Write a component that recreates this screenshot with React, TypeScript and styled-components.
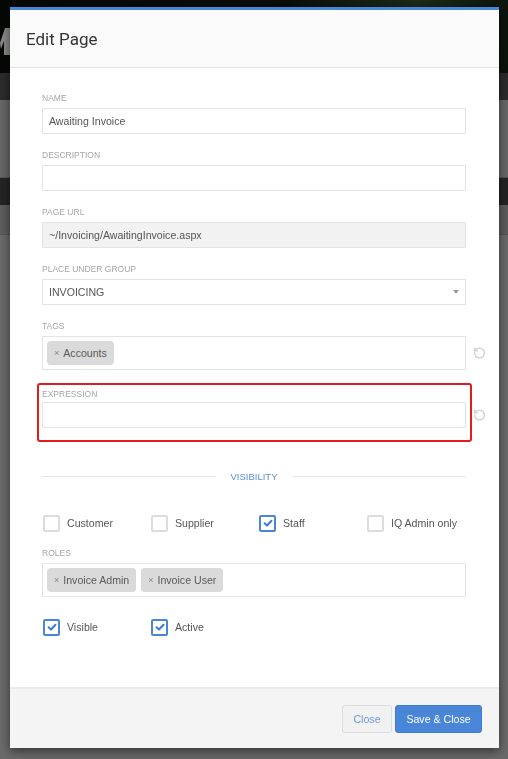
import React from "react";
import styled, { createGlobalStyle } from "styled-components";
import { RotateCcw } from "lucide-react";

const GlobalStyle = createGlobalStyle`
  html, body {
    margin: 0;
    padding: 0;
    height: 100%;
    background: #6a6a6a;
    font-family: "Liberation Sans", Arial, sans-serif;
  }
  * {
    box-sizing: border-box;
  }
`;

const Check = () => (
  <svg width="10" height="10" viewBox="0 0 10 10">
    <polyline
      points="1.6,5.2 4,7.5 8.5,2.7"
      fill="none"
      stroke="#3d7ad6"
      strokeWidth="2"
      strokeLinecap="round"
      strokeLinejoin="round"
    />
  </svg>
);

// the brand mark of the page behind the modal; only its right leg peeks out
const LogoMark = () => (
  <svg width="12" height="30" viewBox="0 0 12 30">
    <polygon points="0,16 5,1 10,1 10,28 4,28 4,14 1,22" fill="#8a8a8a" />
  </svg>
);

const CheckItem = ({ label, checked }: { label: string; checked?: boolean }) => (
  <CheckLabel>
    <Box checked={!!checked}>{checked && <Check />}</Box>
    {label}
  </CheckLabel>
);

const Chip = ({ text }: { text: string }) => (
  <Tag>
    <TagX>×</TagX>
    {text}
  </Tag>
);

const App = () => {
  return (
    <>
      <GlobalStyle />
      <Backdrop>
        <TopBand>
          <LogoMark />
        </TopBand>
        <Band tone="#2c2c2c" h={27} />
        <Band tone="#686868" h={78} line />
        <Band tone="#252525" h={27} />
        <Band tone="#5e5e5e" h={30} line />
        <Band tone="#6b6b6b" h={520} />
      </Backdrop>

      <Modal>
        <Header>
          <Title>Edit Page</Title>
        </Header>

        <Body>
          <Field>
            <Label>Name</Label>
            <Input defaultValue="Awaiting Invoice" />
          </Field>
          <Field>
            <Label>Description</Label>
            <Input defaultValue="" />
          </Field>
          <Field>
            <Label>Page URL</Label>
            <Input defaultValue="~/Invoicing/AwaitingInvoice.aspx" disabled />
          </Field>
          <Field>
            <Label>Place under group</Label>
            <Select>
              INVOICING
              <Caret />
            </Select>
          </Field>
          <Field gap={13}>
            <Label>Tags</Label>
            <ResetRow>
              <TagBox>
                <Chip text="Accounts" />
              </TagBox>
              <Reset>
                <RotateCcw size={13} strokeWidth={2.6} />
              </Reset>
            </ResetRow>
          </Field>

          <Highlight>
            <Label tight>Expression</Label>
            <ResetRow>
              <Input defaultValue="" />
              <Reset>
                <RotateCcw size={13} strokeWidth={2.6} />
              </Reset>
            </ResetRow>
          </Highlight>

          <Divider>
            <span>Visibility</span>
          </Divider>

          <CheckGrid>
            <CheckItem label="Customer" />
            <CheckItem label="Supplier" />
            <CheckItem label="Staff" checked />
            <CheckItem label="IQ Admin only" />
          </CheckGrid>

          <Field gap={21}>
            <Label>Roles</Label>
            <TagBox>
              <Chip text="Invoice Admin" />
              <Chip text="Invoice User" />
            </TagBox>
          </Field>

          <CheckGrid>
            <CheckItem label="Visible" checked />
            <CheckItem label="Active" checked />
          </CheckGrid>
        </Body>

        <Footer>
          <GhostButton>Close</GhostButton>
          <PrimaryButton>Save &amp; Close</PrimaryButton>
        </Footer>
      </Modal>
    </>
  );
};

export default App;

const Backdrop = styled.div`
  position: fixed;
  inset: 0;
  display: flex;
  flex-direction: column;
  z-index: 0;
`;

const TopBand = styled.div`
  height: 73px;
  flex-shrink: 0;
  background: linear-gradient(100deg, #050805 0%, #0a0d0a 55%, #1c2a18 80%, #0b120a 100%);
  padding-top: 27px;
  overflow: hidden;
`;

const Band = styled.div<{ tone: string; h: number; line?: boolean }>`
  height: ${(p) => p.h}px;
  flex-shrink: 0;
  background: ${(p) => p.tone};
  border-bottom: ${(p) => (p.line ? "1px solid #555" : "none")};
`;

const Modal = styled.div`
  position: relative;
  z-index: 1;
  width: 489px;
  margin: 7px 0 0 10px;
  background: #fff;
  border-top: 3px solid #4a86d8;
  box-shadow: 0 3px 10px rgba(0, 0, 0, 0.55);
`;

const Header = styled.div`
  height: 58px;
  background: #fafafa;
  border-bottom: 1px solid #e3e3e3;
  display: flex;
  align-items: center;
  padding: 0 16px;
`;

const Title = styled.h1`
  margin: 0;
  font-size: 17px;
  font-weight: normal;
  color: #333;
  font-family: "Roboto", "Liberation Sans", Arial, sans-serif;
`;

const Body = styled.div`
  display: flex;
  flex-direction: column;
  padding: 24px 33px 51px 32px;
`;

const Field = styled.div<{ gap?: number }>`
  margin-bottom: ${(p) => p.gap ?? 15}px;
`;

const Label = styled.div<{ tight?: boolean }>`
  font-size: 8.5px;
  line-height: 12px;
  color: #a5a5a5;
  text-transform: uppercase;
  margin-bottom: ${(p) => (p.tight ? 2 : 4)}px;
`;

const Input = styled.input`
  display: block;
  width: 100%;
  height: 26px;
  border: 1px solid #e3e3e3;
  border-radius: 1px;
  padding: 0 6px;
  font-size: 10.6px;
  font-family: "Liberation Sans", Arial, sans-serif;
  color: #555;
  background: #fff;
  outline: none;

  &:disabled {
    background: #f2f2f2;
    color: #555;
  }
`;

const Select = styled.div`
  height: 26px;
  border: 1px solid #e3e3e3;
  padding: 0 6px;
  font-size: 10.6px;
  color: #555;
  display: flex;
  align-items: center;
  justify-content: space-between;
`;

const Caret = styled.span`
  width: 0;
  height: 0;
  border-left: 3px solid transparent;
  border-right: 3px solid transparent;
  border-top: 4px solid #999;
`;

const ResetRow = styled.div`
  position: relative;
`;

const Reset = styled.span`
  position: absolute;
  top: 50%;
  right: -20px;
  transform: translateY(-50%);
  color: #cfcfcf;
  display: flex;
`;

const TagBox = styled.div`
  height: 34px;
  border: 1px solid #e3e3e3;
  padding: 0 4px;
  display: flex;
  gap: 5px;
  align-items: center;
`;

const Tag = styled.span`
  height: 24px;
  background: #dadada;
  border-radius: 4px;
  padding: 0 7px;
  display: flex;
  align-items: center;
  font-size: 10.6px;
  color: #5a5a5a;
`;

const TagX = styled.span`
  font-size: 9px;
  color: #888;
  margin-right: 4px;
`;

const Highlight = styled.div`
  margin: 0 -6px 0 -5px;
  border: 2px solid #e41b1b;
  border-radius: 3px;
  padding: 3px 4px 12px 3px;
`;

const Divider = styled.div`
  display: flex;
  align-items: center;
  margin: 29px 0 32px;
  font-size: 9.5px;
  color: #5b8fdc;
  text-transform: uppercase;

  &::before,
  &::after {
    content: "";
    flex: 1;
    height: 1px;
    background: #e3e3e3;
  }

  span {
    padding: 0 15px;
  }
`;

const CheckGrid = styled.div`
  display: grid;
  grid-template-columns: repeat(4, 108px);
  margin-bottom: 15px;

  &:last-child {
    margin-bottom: 0;
  }
`;

const CheckLabel = styled.label`
  display: flex;
  align-items: center;
  font-size: 10.6px;
  color: #555;
  height: 18px;
  padding-left: 1px;
`;

const Box = styled.span<{ checked: boolean }>`
  width: 17px;
  height: 17px;
  border: 2px solid ${(p) => (p.checked ? "#4a86d8" : "#dcdcdc")};
  border-radius: 2px;
  margin-right: 7px;
  display: flex;
  align-items: center;
  justify-content: center;
  background: #fff;
`;

const Footer = styled.div`
  height: 61px;
  background: #f4f4f4;
  border-top: 2px solid #ececec;
  display: flex;
  align-items: center;
  justify-content: flex-end;
  gap: 3px;
  padding: 0 17px 0 0;
`;

const GhostButton = styled.button`
  height: 28px;
  width: 50px;
  border: 1px solid #dcdcdc;
  border-radius: 3px;
  background: #f1f1f1;
  color: #6b9be0;
  font-size: 10.6px;
  font-family: "Liberation Sans", Arial, sans-serif;
`;

const PrimaryButton = styled.button`
  height: 28px;
  width: 87px;
  border: 1px solid #3f7bd0;
  border-radius: 3px;
  background: #4a86d8;
  color: #fff;
  font-size: 10.6px;
  font-family: "Liberation Sans", Arial, sans-serif;
`;
